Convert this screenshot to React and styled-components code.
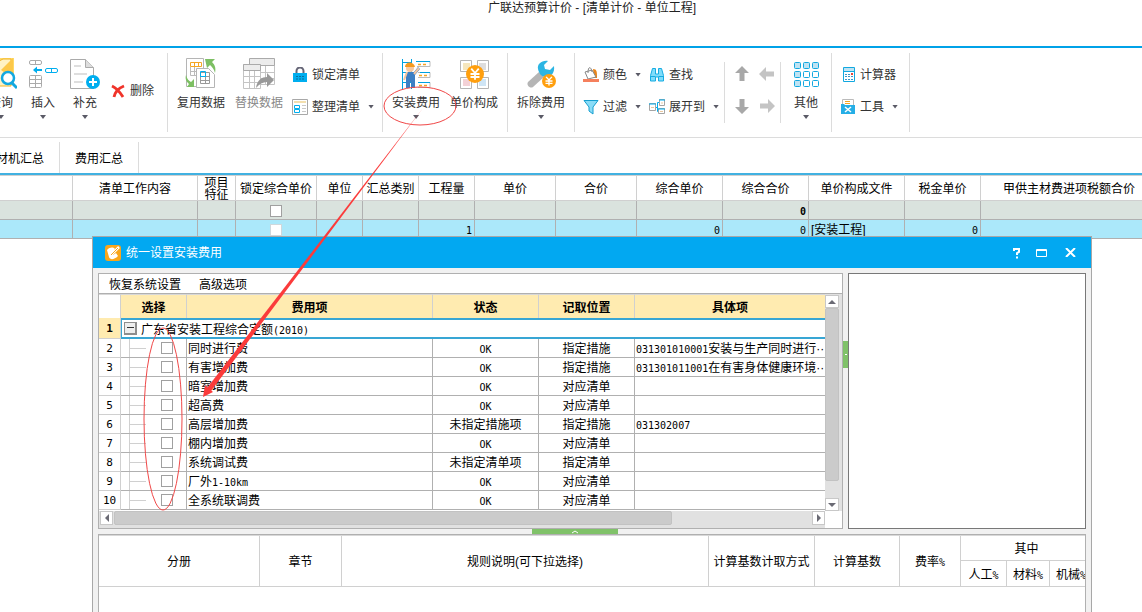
import React from "react";
import styled, { createGlobalStyle, css } from "styled-components";

const GlobalStyle = createGlobalStyle`
  * {
    box-sizing: border-box;
  }
  body {
    margin: 0;
    background: #fff;
    color: #000;
    font-family: "Liberation Sans", "Noto Sans CJK SC", sans-serif;
    font-size: 12px;
    line-height: 16px;
  }
  button {
    border: none;
    background: none;
    padding: 0;
    margin: 0;
    color: inherit;
    font: inherit;
    cursor: pointer;
  }
`;

const Page = styled.div`
  position: relative;
  min-height: 100vh;
  overflow: hidden;
`;

const WindowTitle = styled.h1`
  margin: 0;
  height: 46px;
  padding-left: 42px;
  font-size: 12px;
  line-height: 16px;
  font-weight: normal;
  text-align: center;
  color: #222;
`;

const Ribbon = styled.div`
  display: flex;
  height: 92px;
  padding: 5px 0;
  border-top: 2px solid #00a2e8;
  border-bottom: 1px solid #dcdcdc;
  color: #333;
  white-space: nowrap;
`;

const Group = styled.div`
  display: flex;
  flex: none;
  align-items: flex-start;
  border-right: 1px solid #dcdcdc;
  padding: 5px 4px 0;

  &:first-child {
    margin-left: -20px;
    padding: 5px 9px 0 0;
  }
  &:last-child {
    padding-right: 7px;
  }

  ${({ $short }) =>
    $short &&
    css`
      padding: 0 1px 0 4px;
      margin: 9px 0;

      > * {
        margin-top: -4px;
      }
    `}
`;

const BigButton = styled.button`
  display: flex;
  flex-direction: column;
  align-items: center;
  width: ${({ $narrow }) => ($narrow ? "42px" : "58px")};
  color: ${({ $muted }) => ($muted ? "#888" : "inherit")};

  svg {
    width: 32px;
    height: 32px;
    margin-bottom: 5px;
  }
`;

const Stack = styled.div`
  display: flex;
  flex-direction: column;
  justify-content: center;
  height: 64px;
`;

const SmallButton = styled.button`
  display: flex;
  align-items: center;
  gap: 4px;
  height: 32px;
  padding: 1px 4px 0;

  svg {
    width: 16px;
    height: 16px;
  }
`;

const Caret = styled.span`
  width: 6px;
  height: 4px;
  background: #5a5a66;
  clip-path: polygon(0 0, 100% 0, 50% 100%);
  margin: ${({ $below }) => ($below ? "4px 0 0" : "0 0 0 4px")};
`;

const ArrowPad = styled.div`
  display: grid;
  grid-template-columns: 25px 25px;
  grid-auto-rows: 32px;

  button {
    display: flex;
    align-items: center;
    justify-content: center;
  }
`;

const Tabs = styled.nav`
  display: flex;
  height: 35px;
  padding-top: 4px;
`;

const Tab = styled.button`
  flex: none;
  padding: 2px 15px 0;
  border-right: 1px solid #dcdcdc;

  &:first-child {
    margin-left: -31px;
  }
`;

const BudgetWrap = styled.div`
  border-top: 2px solid #41b1e1;
  overflow: hidden;
`;

const tableBase = css`
  border-collapse: separate;
  border-spacing: 0;
  table-layout: fixed;

  th,
  td {
    padding: 0;
    overflow: hidden;
    white-space: nowrap;
  }
  th {
    font-weight: normal;
  }
`;

const BudgetTable = styled.table`
  ${tableBase}
  width: calc(100% + 16px);
  border-top: 1px solid #d0d0d0;

  th {
    height: 25px;
    padding-top: 2px;
    border-right: 1px solid #d0d0d0;
    border-bottom: 1px solid #d0d0d0;
  }
  td {
    height: 19px;
    padding: 2px 2px 0;
    line-height: 16px;
    border-right: 1px solid #b0b0b0;
    border-bottom: 1px solid #b0b0b0;
  }
`;

const BudgetRow = styled.tr`
  background: ${({ $selected }) => ($selected ? "#abe8fa" : "#dae3de")};
`;

const Wrapped = styled.span`
  display: block;
  width: 24px;
  height: 22px;
  margin: -2px auto 0;
  line-height: 12px;
  white-space: normal;
`;

const Cell = styled.td`
  text-align: ${({ $align }) => $align || "left"};
  font-weight: ${({ $bold }) => ($bold ? "bold" : "normal")};
`;

const Mono = styled.span`
  font-family: "DejaVu Sans Mono", "Noto Sans CJK SC", monospace;
  font-size: 10px;
  line-height: 1;
`;

const Check = styled.input`
  appearance: none;
  display: block;
  width: 12px;
  height: 12px;
  margin: 0 auto;
  border: 1px solid ${({ $pale }) => ($pale ? "#cfd8dc" : "#a0a0a0")};
  background: #fff;

  &:checked {
    background: #41b1e1;
  }
`;

const Dialog = styled.section`
  position: absolute;
  top: 236px;
  bottom: -40px;
  left: 92px;
  right: 50px;
  display: flex;
  flex-direction: column;
  border: 1px solid #a8a8a8;
  background: #f1f1f1;
`;

const DialogBar = styled.header`
  display: flex;
  align-items: center;
  flex: none;
  height: 31px;
  padding: 0 15px 0 12px;
  background: #02a8f1;
  color: #fff;

  h2 {
    flex: 1;
    margin: 0 0 0 5px;
    font-size: 12px;
    font-weight: normal;
  }
  button {
    display: flex;
    align-items: center;
    justify-content: center;
    width: 12px;
    height: 20px;
    margin-left: 12px;
  }
  button:last-child {
    margin-left: 17px;
  }
`;

const DialogBody = styled.div`
  display: flex;
  flex-direction: column;
  flex: 1;
  min-height: 0;
  padding: 5px 5px 0;
`;

const TopPanes = styled.div`
  display: flex;
  flex: none;
  height: 256px;
`;

const FeePane = styled.div`
  display: flex;
  flex-direction: column;
  flex: 1;
  min-width: 0;
  border: 1px solid #b0b0b0;
  background: #fff;
`;

const PaneMenu = styled.div`
  display: flex;
  gap: 18px;
  flex: none;
  height: 20px;
  padding: 2px 0 0 10px;
  border-bottom: 1px solid #b0b0b0;
`;

const FeeScroll = styled.div`
  display: grid;
  grid-template-columns: minmax(0, 1fr) 17px;
  grid-template-rows: minmax(0, 1fr) 17px;
  flex: 1;
  min-height: 0;
`;

const FeeClip = styled.div`
  overflow: hidden;
`;

const FeeTable = styled.table`
  ${tableBase}
  width: 100%;

  thead th {
    height: 24px;
    padding-top: 2px;
    font-weight: bold;
    background: #ffebb0;
    border-top: 1px solid #d8d8d8;
    border-right: 1px solid #d0d0d0;
  }
  thead th:first-child {
    background: #fff;
  }
  thead th:last-child {
    border-right: none;
  }
  tbody th {
    padding-top: 2px;
    font-size: 11px;
    line-height: 16px;
    font-family: "DejaVu Sans Mono", monospace;
    border-right: 1px solid #d0d0d0;
    border-bottom: 1px solid #d0d0d0;
  }
  tbody td {
    height: 19px;
    padding: 2px 1px 0;
    line-height: 16px;
    border-right: 1px solid #b0b0b0;
    border-bottom: 1px solid #b0b0b0;
  }
  tbody td:nth-child(2) {
    padding-top: 0;
  }
  tbody td:last-child {
    border-right: none;
  }
`;

const GroupRow = styled.tr`
  th {
    background: #ffebb0;
    font-weight: bold;
  }
  && td:last-child {
    height: 21px;
    padding: 0 2px;
    border: 2px solid #38a6d4;
    border-right: none;
    border-left-width: 1px;
  }
`;

const GroupLabel = styled.div`
  display: flex;
  align-items: center;
  gap: 4px;
  height: 17px;
  padding-top: 2px;
`;

const Toggle = styled.button`
  width: 13px;
  height: 13px;
  flex: none;
  margin-bottom: 3px;
  border: 2px solid #8e8e8e;
  border-width: 1px 2px 2px 1px;
  background: linear-gradient(#333, #333) center / 7px 1px no-repeat #eee;
`;

const Branch = styled.div`
  display: flex;
  align-items: center;
  height: 18px;
  margin-left: 7px;
  border-left: 1px solid #d0d0d0;

  &::before {
    content: "";
    width: 16px;
    margin-right: 15px;
    border-top: 1px solid #d0d0d0;
  }
  input {
    margin: 0;
  }
`;

const Scrollbar = styled.div`
  display: flex;
  flex-direction: ${({ $vertical }) => ($vertical ? "column" : "row")};
  justify-content: space-between;
  padding: ${({ $vertical }) => ($vertical ? "1px 3px 0 0" : "0 0 3px 1px")};
  background: #e1e1e1;

  button {
    display: flex;
    align-items: center;
    justify-content: center;
    flex: none;
    width: ${({ $vertical }) => ($vertical ? "14px" : "13px")};
    height: ${({ $vertical }) => ($vertical ? "13px" : "14px")};
    background: #fff;
    border: 1px solid #c8c8c8;
  }
`;

const Thumb = styled.div`
  background: #cbcbcb;
  border: 1px solid #c2c2c2;
  border-radius: 2px;
  ${({ $vertical }) =>
    $vertical
      ? "height: 173px; margin-bottom: auto;"
      : "width: 77%; margin: 0 auto 0 1px;"}
`;

const Splitter = styled.div`
  display: flex;
  align-items: center;
  justify-content: center;
  flex: none;
  ${({ $vertical }) =>
    $vertical ? "width: 5px; padding-bottom: 94px;" : "height: 5px; padding-right: 35px;"}

  button {
    display: flex;
    align-items: center;
    justify-content: center;
    background: #80c269;
    ${({ $vertical }) =>
      $vertical ? "width: 5px; height: 27px;" : "width: 86px; height: 5px;"}
  }
`;

const PreviewPane = styled.div`
  flex: none;
  width: 238px;
  border: 1px solid #787878;
  background: #fff;
`;

const RulePane = styled.div`
  flex: 1;
  border: 1px solid #b0b0b0;
  background: #fff;
  overflow: hidden;
`;

const RuleTable = styled.table`
  ${tableBase}
  width: calc(100% + 8px);
  border-top: 1px solid #d8d8d8;

  th {
    height: 26px;
    padding-top: 2px;
    border-right: 1px solid #d0d0d0;
    border-bottom: 1px solid #d0d0d0;
  }
  tr:first-child th {
    height: 25px;
  }
`;

const Marks = styled.svg`
  position: absolute;
  top: 0;
  left: 0;
  width: 500px;
  height: 540px;
  pointer-events: none;
`;

const SearchIcon = () => (
  <svg viewBox="0 0 32 32" fill="none">
    <path d="M5 0h24v27H5z" fill="#ffd966" />
    <path d="M5 28V8L18 1h8v27z" fill="#fff2c4" stroke="#f0b429" />
    <path d="M16 12 28 0v21z" fill="#fcc84a" />
    <circle cx="23" cy="20" r="6" fill="#fff" stroke="#12a8e0" strokeWidth="2.5" />
    <path d="m27 25 5 5" stroke="#12a8e0" strokeWidth="3" />
  </svg>
);

const InsertIcon = () => (
  <svg viewBox="0 0 32 32" fill="none" stroke="#aaa">
    <rect x="2.5" y="2.5" width="12" height="4" rx="1.5" />
    <path d="M8.5 2.5v4M8.5 17.5v12M2.5 21.5h12M2.5 25.5h12" />
    <rect x="2.5" y="17.5" width="12" height="12" rx="1" />
    <path d="M15 12H8" stroke="#00aeef" strokeWidth="2" />
    <path d="m6 12 4-3.5v7z" fill="#00aeef" stroke="none" />
    <rect x="18.5" y="10.5" width="12" height="4" rx="1.5" stroke="#00aeef" />
    <path d="M24.5 10.5v4" stroke="#00aeef" />
  </svg>
);

const SupplyIcon = () => (
  <svg viewBox="0 0 32 32" fill="none">
    <path d="M1.5 1.5h15l8 8v21h-23z" fill="#fff" stroke="#aaa" />
    <path d="M16.5 1.5v8h8" fill="#ddd" stroke="#aaa" />
    <path d="M5 8h7M5 16h13M5 24h9" stroke="#dedede" strokeWidth="2" />
    <circle cx="24" cy="24" r="7" fill="#00aeef" />
    <path d="M24 20v8M20 24h8" stroke="#fff" strokeWidth="2" />
  </svg>
);

const DeleteIcon = () => (
  <svg viewBox="0 0 16 16" fill="none">
    <path d="M2 3c4 2 8 6 11 11M14 3C9 5 5 9 4 14" stroke="#f0342a" strokeWidth="2.8" />
  </svg>
);

const ReuseIcon = () => (
  <svg viewBox="0 0 32 32" fill="none">
    <path d="M1.5.5h17v28h-17z" fill="#fff" stroke="#b5b5b5" />
    <path d="M5.5 4.5h11v4h-11zM9.5 4v5M13.5 4v5" stroke="#f5a623" />
    <path d="M5.5 9v8.5h6M5.5 13.5h6M9.5 9v8" stroke="#bbb" />
    <path d="M11.5 10.5h12l6 6v13h-18z" fill="#fff" stroke="#b5b5b5" />
    <path d="M15.5 14.5h9v11h-9zM20.5 14v12M15 18.5h10M15 22.5h10" stroke="#999" />
    <path d="M15.5 13.5h5v5h-5z" stroke="#00aeef" />
    <path d="M20 1h10l-3 3c3 3 4 6 3 11-1-4-3-6-5-8l-3 3zM1 17c1 4 3 6 5 7l3-3v8H2l2-3c-3-3-4-5-3-9z" fill="#7dbf63" />
  </svg>
);

const ReplaceIcon = () => (
  <svg viewBox="0 0 32 32" fill="none" stroke="#c4c4c4">
    <path d="M6.5 1.5h25v25h-25zM14.5 8v18M22.5 8v18M7 14.5h24M7 20.5h24" fill="#fff" />
    <path d="M6.5.5h25v7h-25z" fill="#ececec" stroke="#aaa" />
    <path d="M.5 6.5h17v24H.5zM.5 18.5h17M.5 24.5h17M6.5 12v18M11.5 12v18" fill="#fff" />
    <path d="M.5 6.5h17v6H.5z" fill="#ececec" stroke="#aaa" />
    <path d="M13 30c1-8 6-11 11-11v-4l7 7-7 7v-5c-4 0-8 2-11 6z" fill="#999" stroke="none" />
  </svg>
);

const LockIcon = () => (
  <svg viewBox="0 0 16 16" fill="none">
    <path d="M4.5 7V4a3.5 3.5 0 0 1 7 0v3" stroke="#667" strokeWidth="2" />
    <path d="M1 6h14v9H1z" fill="#00aeef" />
    <path d="M4 9.5h2m1 0h2m1 0h2M4 12h2m1 0h2m1 0h2" stroke="#0b6f9c" />
  </svg>
);

const ArrangeIcon = () => (
  <svg viewBox="0 0 16 16" fill="none">
    <path d="M.5.5h15v15H.5z" fill="#fff" stroke="#a8a8a8" />
    <path d="M2 3h12" stroke="#f3dfae" strokeWidth="2" />
    <path d="M2.5 6.5h5v3h-5zM2.5 10.5h5v3h-5z" stroke="#00aeef" />
    <path d="M10 6.5h4M10 9.5h4M10 12.5h4" stroke="#c9c9c9" />
  </svg>
);

const WorkerIcon = () => (
  <svg viewBox="0 0 32 32" fill="none">
    <path d="M2.5 1v30M11.5 1v30M3 4.5h8M3 14.5h8M3 24.5h8" stroke="#00a2e0" />
    <path d="M16 3.5h14v5H17M18 14.5h12v5H18M18 24.5h12v5H18" stroke="#bbb" />
    <path d="M16 3.5h14M20 14.5h10M18 24.5h12" stroke="#00a2e0" />
    <path d="M18 6.5h3m2 0h3M19 17.5h3m2 0h3M19 27.5h3m2 0h3" stroke="#f5a623" strokeWidth="1.5" />
    <circle cx="10" cy="10" r="4" fill="#f7c9a0" />
    <path d="M5 9c0-6 9-6 10 0z" fill="#f59a1e" />
    <path d="M6 14h8l4-5 2 2-5 6v13h-4v-6h-1v6H6z" fill="#3d7fc4" />
    <path d="M7 14 4 22M14 16l5-6" stroke="#f4c6a0" strokeWidth="2" />
  </svg>
);

const Coin = ({ cx, cy, r }) => (
  <g>
    <circle cx={cx} cy={cy} r={r} fill="#ff9f0f" />
    <path
      d={`M${cx - r / 2.4} ${cy - r / 1.7}L${cx} ${cy - 1}L${cx + r / 2.4} ${cy - r / 1.7}M${cx} ${cy - 1}V${cy + r / 1.6}M${cx - r / 2} ${cy}h${r}M${cx - r / 2} ${cy + r / 3}h${r}`}
      stroke="#fff"
      strokeWidth={r / 5}
      fill="none"
    />
  </g>
);

const PriceIcon = () => (
  <svg viewBox="0 0 32 32" fill="none">
    <path
      d="M2.5 2.5h11v11h-11zM19.5 2.5h11v11h-11zM2.5 19.5h11v11h-11zM19.5 19.5h11v11h-11z"
      fill="#fff"
      stroke="#b5b5b5"
    />
    <path d="M5 5h7v7H5z" fill="#f5e6bd" />
    <path d="M21 5h7v7h-7z" fill="#ddd" />
    <path d="M5 21h7v7H5z" fill="#f3d1d6" />
    <path d="M21 21h7v7h-7z" fill="#cfe5f5" />
    <Coin cx={17} cy={16} r={9} />
  </svg>
);

const WrenchIcon = () => (
  <svg viewBox="0 0 32 32" fill="none">
    <path d="m14 14 5 5L8 29c-3 2-7-2-5-5z" fill="#b5b5b5" />
    <path d="M23 3c-6-1-11 3-10 8 1 5 4 8 8 8 5 0 9-4 8-11l-4 4-5-1-1-4z" fill="#2cb5e3" />
    <Coin cx={24} cy={23} r={7} />
  </svg>
);

const ColorIcon = () => (
  <svg viewBox="0 0 16 16" fill="none">
    <path d="M10 2c4 0 4 3 4 9h-3z" fill="#e8851c" />
    <path d="m2 5 7-2 4 7-8 2z" fill="#fff" stroke="#888" />
    <path d="M5 6c0-7 3-7 4-1" stroke="#888" />
    <path d="M0 12h16v3H0z" fill="#f5805d" />
  </svg>
);

const FilterIcon = () => (
  <svg viewBox="0 0 16 16" fill="none">
    <path d="M1 1.5h14L10 8v7l-4-3V8z" fill="#8adcf7" stroke="#159fd0" />
  </svg>
);

const FindIcon = () => (
  <svg viewBox="0 0 16 16" fill="#7fdcfa" stroke="#16ace2">
    <path d="M3.5 1.5h3V7h3V1.5h3l2 7v5.5h-5V10h-3v4h-5V8.5z" />
    <path d="M1.5 9.5h5M9.5 9.5h5" />
  </svg>
);

const ExpandIcon = () => (
  <svg viewBox="0 0 16 16" fill="#fff" stroke="#a5a5a5">
    <path d="M6 8.5h3M8.5 3.5v9H11M8.5 3.5H11" stroke="#00aeef" fill="none" />
    <path d="M.5 4.5h6v7h-6zM10.5.5h5v6h-5zM9.5 9.5h6v5h-6z" />
    <path d="M0 5h7M10 1h6M9 10h7" stroke="#00aeef" />
    <path d="M2 8.5h3M12 4h2M11 12.5h3" stroke="#e8c8a0" />
  </svg>
);

const BlockArrow = ({ turn, tone }) => (
  <svg width="16" height="16" viewBox="0 0 16 16">
    <path d="M8 0 15 7H10.5v8h-5V7H1z" fill={tone} transform={`rotate(${turn} 8 8)`} />
  </svg>
);

const GridIcon = () => (
  <svg viewBox="0 0 32 32" stroke="#12a8e0">
    {[4, 13, 22].map((y, row) =>
      [4, 13, 22].map((x, col) => (
        <rect
          key={`${x}-${y}`}
          x={x + 0.5}
          y={y + 0.5}
          width="6"
          height="6"
          rx="1"
          fill={row === 0 || col === 0 ? "#bfe3f3" : "#fff"}
        />
      ))
    )}
  </svg>
);

const CalculatorIcon = () => (
  <svg viewBox="0 0 16 16" fill="none">
    <path d="M3.5.5h11v14h-11z" fill="#fff" stroke="#12a8e0" />
    <path d="M4 4.5h10" stroke="#12a8e0" />
    <path d="M4 2.5h10" stroke="#bfe3f3" strokeWidth="3" />
    <path d="M5 7.5h8M5 9.5h8M5 12.5h8" stroke="#3c96c8" strokeDasharray="2 1" />
    <path d="M11 6h2v2h-2z" fill="#e8443a" />
  </svg>
);

const ToolIcon = () => (
  <svg viewBox="0 0 16 16" fill="none">
    <path d="M2.5.5h11V8h-11z" fill="#fff" stroke="#bbb" />
    <path d="M5 2.5h5M5 4.5h5" stroke="#f5a623" />
    <path d="M1 5h3l1 1h10v9H1z" fill="#25aee6" />
    <path d="m5 8 6 5M11 8l-6 5" stroke="#fff" strokeWidth="1.5" />
  </svg>
);

const AppIcon = () => (
  <svg width="16" height="16" viewBox="0 0 16 16" fill="none">
    <rect width="16" height="16" rx="3" fill="#f9a61a" />
    <path d="M2 5c3-3 6-3 8-1L7 9l1 1 3-2 2 3c-4 4-8 4-9 1z" fill="#fff" />
    <path d="m6 10 8-8" stroke="#fff" strokeWidth="2.5" />
    <path d="m6 10 7-7" stroke="#f9a61a" />
  </svg>
);

const Triangle = ({ turn = 0 }) => (
  <svg width="8" height="8" viewBox="0 0 8 8">
    <path d="M0 6 4 2l4 4z" fill="#6a6a74" transform={`rotate(${turn} 4 4)`} />
  </svg>
);

const Chevron = ({ width, height }) => (
  <svg width={width} height={height} viewBox={`0 0 ${width} ${height}`} fill="none" stroke="#fff">
    <path d={`M1 ${height - 1}L${width / 2} 1L${width - 1} ${height - 1}`} />
  </svg>
);

const budgetColumns = [
  { title: "", width: 73 },
  { title: "清单工作内容", width: 125 },
  { title: "项目特征", width: 38, wrap: true },
  { title: "锁定综合单价", width: 81 },
  { title: "单位", width: 46 },
  { title: "汇总类别", width: 56 },
  { title: "工程量", width: 56 },
  { title: "单价", width: 81 },
  { title: "合价", width: 81 },
  { title: "综合单价", width: 86 },
  { title: "综合合价", width: 86 },
  { title: "单价构成文件", width: 96 },
  { title: "税金单价", width: 76 },
  { title: "甲供主材费进项税额合价" },
];

const budgetRows = [
  { 10: "0" },
  { 6: "1", 9: "0", 10: "0", 11: "[安装工程]", 12: "0" },
];

const fees = [
  { name: "同时进行费", status: "OK", place: "指定措施", code: "031301010001", item: "安装与生产同时进行··" },
  { name: "有害增加费", status: "OK", place: "指定措施", code: "031301011001", item: "在有害身体健康环境··" },
  { name: "暗室增加费", status: "OK", place: "对应清单" },
  { name: "超高费", status: "OK", place: "对应清单" },
  { name: "高层增加费", status: "未指定措施项", place: "指定措施", code: "031302007" },
  { name: "棚内增加费", status: "OK", place: "对应清单" },
  { name: "系统调试费", status: "未指定清单项", place: "指定清单" },
  { name: "厂外", range: "1-10km", status: "OK", place: "对应清单" },
  { name: "全系统联调费", status: "OK", place: "对应清单" },
];

const Big = ({ icon, label, menu, narrow, muted }) => (
  <BigButton type="button" $narrow={narrow} $muted={muted}>
    {icon}
    <span>{label}</span>
    {menu && <Caret $below />}
  </BigButton>
);

const Small = ({ icon, label, menu }) => (
  <SmallButton type="button">
    {icon}
    <span>{label}</span>
    {menu && <Caret />}
  </SmallButton>
);

const RibbonBar = () => (
  <Ribbon>
    <Group>
      <Big narrow menu icon={<SearchIcon />} label="查询" />
      <Big narrow menu icon={<InsertIcon />} label="插入" />
      <Big narrow menu icon={<SupplyIcon />} label="补充" />
      <Stack>
        <Small icon={<DeleteIcon />} label="删除" />
      </Stack>
    </Group>
    <Group>
      <Big icon={<ReuseIcon />} label="复用数据" />
      <Big muted icon={<ReplaceIcon />} label="替换数据" />
      <Stack>
        <Small icon={<LockIcon />} label="锁定清单" />
        <Small menu icon={<ArrangeIcon />} label="整理清单" />
      </Stack>
    </Group>
    <Group>
      <Big menu icon={<WorkerIcon />} label="安装费用" />
      <Big icon={<PriceIcon />} label="单价构成" />
    </Group>
    <Group>
      <Big menu icon={<WrenchIcon />} label="拆除费用" />
    </Group>
    <Group $short>
      <Stack>
        <Small menu icon={<ColorIcon />} label="颜色" />
        <Small menu icon={<FilterIcon />} label="过滤" />
      </Stack>
      <Stack>
        <Small icon={<FindIcon />} label="查找" />
        <Small menu icon={<ExpandIcon />} label="展开到" />
      </Stack>
    </Group>
    <Group $short>
      <ArrowPad>
        <button type="button" aria-label="上移"><BlockArrow turn={0} tone="#a8a8a8" /></button>
        <button type="button" aria-label="升级"><BlockArrow turn={-90} tone="#c4c4c4" /></button>
        <button type="button" aria-label="下移"><BlockArrow turn={180} tone="#a8a8a8" /></button>
        <button type="button" aria-label="降级"><BlockArrow turn={90} tone="#c4c4c4" /></button>
      </ArrowPad>
    </Group>
    <Group>
      <Big narrow menu icon={<GridIcon />} label="其他" />
    </Group>
    <Group>
      <Stack>
        <Small icon={<CalculatorIcon />} label="计算器" />
        <Small menu icon={<ToolIcon />} label="工具" />
      </Stack>
    </Group>
  </Ribbon>
);

const BudgetGrid = () => (
  <BudgetWrap>
    <BudgetTable>
      <colgroup>
        {budgetColumns.map(({ title, width }) => (
          <col key={title} width={width} />
        ))}
      </colgroup>
      <thead>
        <tr>
          {budgetColumns.map(({ title, wrap }) => (
            <th key={title}>{wrap ? <Wrapped>{title}</Wrapped> : title}</th>
          ))}
        </tr>
      </thead>
      <tbody>
        {budgetRows.map((row, index) => (
          <BudgetRow key={index} $selected={index === 1}>
            {budgetColumns.map(({ title }, col) => {
              if (col === 3) {
                return (
                  <Cell key={title}>
                    <Check type="checkbox" aria-label={title} $pale={index === 1} />
                  </Cell>
                );
              }
              return (
                <Cell key={title} $align={col === 11 ? "left" : "right"} $bold={index === 0}>
                  {col === 11 ? row[col] : <Mono>{row[col]}</Mono>}
                </Cell>
              );
            })}
          </BudgetRow>
        ))}
      </tbody>
    </BudgetTable>
  </BudgetWrap>
);

const FeeGrid = () => (
  <FeeTable>
    <colgroup>
      <col width="22" />
      <col width="66" />
      <col />
      <col width="106" />
      <col width="96" />
      <col width="190" />
    </colgroup>
    <thead>
      <tr>
        <th />
        <th>选择</th>
        <th>费用项</th>
        <th>状态</th>
        <th>记取位置</th>
        <th>具体项</th>
      </tr>
    </thead>
    <tbody>
      <GroupRow>
        <th>1</th>
        <td colSpan="5">
          <GroupLabel>
            <Toggle type="button" aria-label="折叠" />
            <span>
              广东省安装工程综合定额<Mono>(2010)</Mono>
            </span>
          </GroupLabel>
        </td>
      </GroupRow>
      {fees.map(({ name, range, status, place, code, item }, index) => (
        <tr key={name}>
          <th>{index + 2}</th>
          <Cell>
            <Branch>
              <Check type="checkbox" aria-label={name} />
            </Branch>
          </Cell>
          <Cell>
            {name}
            {range && <Mono>{range}</Mono>}
          </Cell>
          <Cell $align="center">{status === "OK" ? <Mono>OK</Mono> : status}</Cell>
          <Cell $align="center">{place}</Cell>
          <Cell>
            <Mono>{code}</Mono>
            {item}
          </Cell>
        </tr>
      ))}
    </tbody>
  </FeeTable>
);

const RuleGrid = () => (
  <RuleTable>
    <colgroup>
      <col width="161" />
      <col width="82" />
      <col />
      <col width="106" />
      <col width="85" />
      <col width="61" />
      <col width="46" />
      <col width="43" />
      <col width="43" />
    </colgroup>
    <thead>
      <tr>
        <th rowSpan="2">分册</th>
        <th rowSpan="2">章节</th>
        <th rowSpan="2">规则说明(可下拉选择)</th>
        <th rowSpan="2">计算基数计取方式</th>
        <th rowSpan="2">计算基数</th>
        <th rowSpan="2">费率<Mono>%</Mono></th>
        <th colSpan="3">其中</th>
      </tr>
      <tr>
        <th>人工<Mono>%</Mono></th>
        <th>材料<Mono>%</Mono></th>
        <th>机械<Mono>%</Mono></th>
      </tr>
    </thead>
  </RuleTable>
);

const FeeDialog = () => (
  <Dialog role="dialog" aria-label="统一设置安装费用">
    <DialogBar>
      <AppIcon />
      <h2>统一设置安装费用</h2>
      <button type="button" aria-label="帮助">
        <svg width="8" height="12" viewBox="0 0 8 12" fill="none" stroke="#fff" strokeWidth="2">
          <path d="M1 4V2h5v3L4 6v2M4 9.5v2" />
        </svg>
      </button>
      <button type="button" aria-label="最大化">
        <svg width="11" height="8" viewBox="0 0 11 8" fill="none" stroke="#fff">
          <path d="M.5.5h10v7H.5zM0 1.5h11" />
        </svg>
      </button>
      <button type="button" aria-label="关闭">
        <svg width="11" height="9" viewBox="0 0 11 9" fill="none" stroke="#fff" strokeWidth="2">
          <path d="m1 0 9 9M10 0 1 9" />
        </svg>
      </button>
    </DialogBar>
    <DialogBody>
      <TopPanes>
        <FeePane>
          <PaneMenu>
            <button type="button">恢复系统设置</button>
            <button type="button">高级选项</button>
          </PaneMenu>
          <FeeScroll>
            <FeeClip>
              <FeeGrid />
            </FeeClip>
            <Scrollbar $vertical>
              <button type="button" aria-label="向上滚动"><Triangle /></button>
              <Thumb $vertical />
              <button type="button" aria-label="向下滚动"><Triangle turn={180} /></button>
            </Scrollbar>
            <Scrollbar>
              <button type="button" aria-label="向左滚动"><Triangle turn={-90} /></button>
              <Thumb />
              <button type="button" aria-label="向右滚动"><Triangle turn={90} /></button>
            </Scrollbar>
          </FeeScroll>
        </FeePane>
        <Splitter $vertical>
          <button type="button" aria-label="折叠右侧"><Chevron width={4} height={3} /></button>
        </Splitter>
        <PreviewPane />
      </TopPanes>
      <Splitter>
        <button type="button" aria-label="折叠下方"><Chevron width={8} height={4} /></button>
      </Splitter>
      <RulePane>
        <RuleGrid />
      </RulePane>
    </DialogBody>
  </Dialog>
);

const App = () => (
  <Page>
    <GlobalStyle />
    <WindowTitle>广联达预算计价 - [清单计价 - 单位工程]</WindowTitle>
    <RibbonBar />
    <Tabs>
      <Tab type="button">人材机汇总</Tab>
      <Tab type="button">费用汇总</Tab>
    </Tabs>
    <BudgetGrid />
    <FeeDialog />
    <Marks viewBox="0 0 500 540" fill="none" stroke="#f04848">
      <ellipse cx="420" cy="106" rx="36" ry="19" />
      <ellipse cx="163" cy="419" rx="19" ry="91" />
      <path d="M423 108 207 388l4 3z" fill="#fb3b3b" stroke="none" />
      <path d="m203 397 2-12 8 7z" fill="#fb3b3b" stroke="none" />
    </Marks>
  </Page>
);

export default App;
